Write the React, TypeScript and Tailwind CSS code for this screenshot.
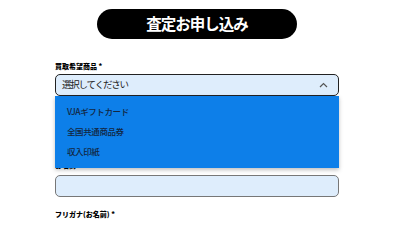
import React from "react";

export default function App() {
  return (
    <div
      className="w-[400px] h-[219px] overflow-hidden bg-white"
      style={{ fontFamily: '"Noto Sans CJK JP", "Noto Sans", sans-serif' }}
    >
      <div className="flex justify-start pl-[97px] pt-[9px]">
        <button className="w-[200px] h-[30px] rounded-full bg-black text-white text-[15.5px] font-bold leading-none tracking-[-1px] flex items-center justify-center">
          査定お申し込み
        </button>
      </div>
      <div className="pl-[55px] w-[339px] pt-[22px]">
        <div className="text-[7px] font-black leading-[10px] text-black">買取希望商品 *</div>
        <div className="relative mt-[3px]">
          <div className="h-[22px] rounded-[5px] border-[1.5px] border-[#222] bg-[#deedfc] flex items-center justify-between pl-[6px] pr-[10px]">
            <span className="text-[9.5px] leading-none tracking-[-1.2px] text-[#222]">選択してください</span>
            <svg width="9" height="6" viewBox="0 0 9 6" fill="none">
              <path d="M1 5 L4.5 1.5 L8 5" stroke="#555" strokeWidth="1.2" />
            </svg>
          </div>
          <div className="absolute left-0 right-0 top-[22px] h-[72px] bg-[#0d7fe9] shadow-[0_2px_4px_rgba(0,0,0,0.25)] flex flex-col pt-[10px] pl-[12px] gap-[9px] z-10">
            <div className="text-[8.5px] font-medium leading-[11px] tracking-[-0.4px] text-[#13263f]">VJAギフトカード</div>
            <div className="text-[8.5px] font-medium leading-[11px] tracking-[-0.4px] text-[#13263f]">全国共通商品券</div>
            <div className="text-[8.5px] font-medium leading-[11px] tracking-[-0.4px] text-[#13263f]">収入印紙</div>
          </div>
        </div>
        <div className="mt-[65px] text-[7px] font-black leading-[8px] text-black">お名前 *</div>
        <div className="mt-[6px] h-[22px] rounded-[5px] border-[1.5px] border-[#777] bg-[#deedfc]" />
        <div className="mt-[12px] text-[7px] font-black leading-[10px] text-black">フリガナ(お名前) *</div>
      </div>
    </div>
  );
}
